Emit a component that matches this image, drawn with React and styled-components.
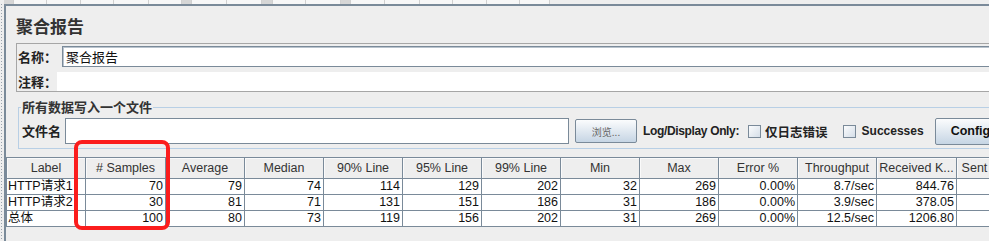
import React from "react";
import styled, { createGlobalStyle } from "styled-components";

const slate = "#7a8a99";

const GlobalStyle = createGlobalStyle`
  html, body {
    margin: 0;
    padding: 0;
    background: #eeeeee;
    overflow: hidden;
  }
  body {
    font-family: "Liberation Sans", Arial, "Noto Sans CJK SC", sans-serif;
    color: #222;
  }
`;

const columns = [
  { key: "label", title: "Label", w: 79 },
  { key: "samples", title: "# Samples", w: 80 },
  { key: "avg", title: "Average", w: 79 },
  { key: "median", title: "Median", w: 79 },
  { key: "p90", title: "90% Line", w: 79 },
  { key: "p95", title: "95% Line", w: 79 },
  { key: "p99", title: "99% Line", w: 79 },
  { key: "min", title: "Min", w: 79 },
  { key: "max", title: "Max", w: 79 },
  { key: "err", title: "Error %", w: 79 },
  { key: "tp", title: "Throughput", w: 79 },
  { key: "recv", title: "Received K...", w: 80 },
  { key: "sent", title: "Sent KB/sec", w: 79 },
];

const rows = [
  ["HTTP请求1", "70", "79", "74", "114", "129", "202", "32", "269", "0.00%", "8.7/sec", "844.76", ""],
  ["HTTP请求2", "30", "81", "71", "131", "151", "186", "31", "186", "0.00%", "3.9/sec", "378.05", ""],
  ["总体", "100", "80", "73", "119", "156", "202", "31", "269", "0.00%", "12.5/sec", "1206.80", ""],
];

// bits of the tab/table strip peeking in at the very top
const strip = [10, 33, 34, 33, 35, 33, 10, 35, 35, 11, 33, 35, 10, 34, 35, 33, 34, 33, 30];

export default function App() {
  return (
    <>
      <GlobalStyle />
      <Screen>
        <TopStrip>
          {strip.map((w, i) => (
            <StripCell key={i} w={w} dark={w < 12} />
          ))}
        </TopStrip>
        <Main>
          <LeftRail />
          <Panel>
            <Title>聚合报告</Title>
            <NameBox>
              <NameRow>
                <FieldLabel w="45px">名称：</FieldLabel>
                <TextField>聚合报告</TextField>
              </NameRow>
              <CommentRow>
                <FieldLabel w="40px">注释：</FieldLabel>
                <CommentField />
              </CommentRow>
            </NameBox>

            <FileSet>
              <Legend>所有数据写入一个文件</Legend>
              <FileRow>
                <FieldLabel w="44px">文件名</FieldLabel>
                <FileInput />
                <BrowseButton>浏览...</BrowseButton>
                <OptionText ml="6px" tight>
                  Log/Display Only:
                </OptionText>
                <CheckBox ml="9px" />
                <OptionText ml="4px" cjk>
                  仅日志错误
                </OptionText>
                <CheckBox ml="15px" />
                <OptionText ml="6px">Successes</OptionText>
                <ConfigButton>Configure</ConfigButton>
              </FileRow>
            </FileSet>

            <Table>
              {columns.map((c) => (
                <HeadCell key={c.key} w={c.w}>
                  {c.title}
                </HeadCell>
              ))}
              {rows.map((r, ri) =>
                r.map((v, ci) => (
                  <Cell key={ri + "-" + ci} left={ci === 0}>
                    {v}
                  </Cell>
                ))
              )}
            </Table>
          </Panel>
        </Main>
        <Highlight />
      </Screen>
    </>
  );
}

const Screen = styled.div`
  position: relative;
  width: 989px;
  height: 241px;
  overflow: hidden;
  background: #eeeeee;
`;

const TopStrip = styled.div`
  display: flex;
  height: 4px;
  padding-left: 4px;
  background: #eeeeee;
`;

const StripCell = styled.div`
  flex: 0 0 ${(p) => p.w}px;
  box-sizing: border-box;
  background: ${(p) => (p.dark ? "#d6d6d6" : "#f7f7f7")};
  border-right: 1px solid #d0d0d0;
`;

const Main = styled.div`
  display: flex;
`;

const LeftRail = styled.div`
  flex: 0 0 4px;
  height: 237px;
  background-image: repeating-linear-gradient(
    to bottom,
    #9aa3ad 0px,
    #9aa3ad 1px,
    transparent 1px,
    transparent 3px
  );
  background-size: 1px 100%;
  background-position: 1px 0;
  background-repeat: no-repeat;
`;

const Panel = styled.div`
  flex: 0 0 1100px;
  border-left: 2px solid ${slate};
  border-top: 2px solid ${slate};
  height: 240px;
`;

const Title = styled.div`
  margin-left: 10px;
  padding: 8px 0 5px;
  height: 24px;
  line-height: 24px;
  font-size: 17px;
  font-weight: bold;
  color: #333;
  font-family: "Noto Sans CJK SC", sans-serif;
`;

const NameBox = styled.div`
  margin-left: 10px;
  border: 1px solid #a6a6a6;
  padding-top: 2px;
`;

const NameRow = styled.div`
  display: flex;
  align-items: center;
  height: 21px;
  margin-bottom: 5px;
`;

const CommentRow = styled.div`
  display: flex;
  align-items: center;
  height: 19px;
`;

const FieldLabel = styled.div`
  flex: 0 0 ${(p) => p.w};
  padding-left: 1px;
  box-sizing: border-box;
  font-size: 13px;
  font-weight: bold;
  color: #222;
  font-family: "Noto Sans CJK SC", sans-serif;
  line-height: 18px;
`;

const TextField = styled.div`
  flex: 1;
  height: 21px;
  box-sizing: border-box;
  border: 1px solid ${slate};
  box-shadow: inset 1px 1px 0 #b9c3cd;
  background: #fff;
  padding-left: 3px;
  font-size: 13px;
  line-height: 19px;
  color: #111;
  font-family: "Noto Sans CJK SC", sans-serif;
`;

const CommentField = styled.div`
  flex: 1;
  height: 19px;
  background: #fff;
`;

const FileSet = styled.fieldset`
  margin: 7px 0 0 12px;
  padding: 3px 0 4px 2px;
  border: 1px solid #b8cfe5;
  min-width: 0;
`;

const Legend = styled.legend`
  margin-left: 0;
  padding: 0 1px;
  font-size: 13px;
  line-height: 16px;
  font-weight: bold;
  color: #333;
  font-family: "Noto Sans CJK SC", sans-serif;
`;

const FileRow = styled.div`
  display: flex;
  align-items: center;
  height: 26px;
  white-space: nowrap;
`;

const FileInput = styled.div`
  flex: 0 0 504px;
  height: 26px;
  box-sizing: border-box;
  border: 1px solid ${slate};
  background: #fff;
`;

const BrowseButton = styled.div`
  flex: 0 0 62px;
  margin-left: 6px;
  height: 24px;
  box-sizing: border-box;
  border: 1px solid ${slate};
  border-radius: 2px;
  background: linear-gradient(#fbfcfd, #c6d5e4);
  font-size: 10px;
  color: #666;
  display: flex;
  align-items: center;
  justify-content: center;
  font-family: "Noto Sans CJK SC", sans-serif;
`;

const OptionText = styled.span`
  margin-left: ${(p) => p.ml || "0"};
  font-size: ${(p) => (p.cjk ? "12.5px" : "12px")};
  font-weight: bold;
  color: #222;
  letter-spacing: ${(p) => (p.tight ? "-0.35px" : "0")};
  font-family: ${(p) =>
    p.cjk ? `"Noto Sans CJK SC", sans-serif` : `"Liberation Sans", Arial, sans-serif`};
`;

const CheckBox = styled.span`
  flex: 0 0 13px;
  height: 13px;
  box-sizing: border-box;
  margin-left: ${(p) => p.ml || "0"};
  border: 1px solid ${slate};
  background: linear-gradient(135deg, #fbfcfd, #d5dee8);
`;

const ConfigButton = styled.div`
  flex: 0 0 110px;
  margin-left: 11px;
  height: 27px;
  box-sizing: border-box;
  border: 1px solid ${slate};
  border-radius: 2px;
  background: linear-gradient(#fbfcfd, #c6d5e4);
  padding-left: 15px;
  font-size: 12.5px;
  font-weight: bold;
  color: #111;
  line-height: 25px;
`;

const Table = styled.div`
  margin-top: 8px;
  display: grid;
  grid-template-columns: ${columns.map((c) => c.w + "px").join(" ")};
  border-left: 1px solid ${slate};
  border-top: 1px solid ${slate};
  width: max-content;
  font-size: 12.5px;
`;

const HeadCell = styled.div`
  height: 21px;
  box-sizing: border-box;
  border-right: 1px solid ${slate};
  border-bottom: 1px solid ${slate};
  box-shadow: inset 1px 1px 0 #fafafa;
  background: #eeeeee;
  color: #333;
  display: flex;
  align-items: center;
  justify-content: center;
  white-space: nowrap;
  overflow: hidden;
`;

const Cell = styled.div`
  height: 16px;
  box-sizing: border-box;
  border-right: 1px solid ${slate};
  border-bottom: 1px solid ${slate};
  background: #fff;
  color: #111;
  line-height: 15px;
  text-align: ${(p) => (p.left ? "left" : "right")};
  padding: ${(p) => (p.left ? "0 0 0 1px" : "0 2px 0 0")};
  white-space: nowrap;
  overflow: hidden;
  font-family: "Liberation Sans", Arial, "Noto Sans CJK SC", sans-serif;
`;

// red annotation drawn over the screenshot
const Highlight = styled.div`
  position: absolute;
  left: 74px;
  top: 140px;
  width: 96px;
  height: 90px;
  box-sizing: border-box;
  border: 4px solid #fb1d1d;
  border-radius: 8px;
  pointer-events: none;
`;
